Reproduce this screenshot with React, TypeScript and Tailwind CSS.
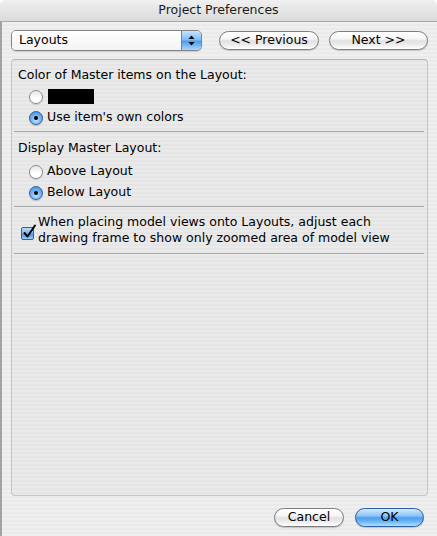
import React from "react";

const font = { fontFamily: '"DejaVu Sans", "Liberation Sans", sans-serif' };

const AquaButton = ({ label, width, primary }: { label: string; width: string; primary?: boolean }) => (
  <div
    className={`${width} h-[19px] flex items-center justify-center rounded-full border text-[12.5px] leading-none shadow-[0_1px_1px_rgba(0,0,0,0.18)] ${
      primary
        ? "border-[#2c5ea6] text-black bg-[linear-gradient(to_bottom,#d2e9fd_0%,#8cc5f6_40%,#4f9eee_52%,#6cb7f6_75%,#b2e2fd_100%)]"
        : "border-[#7d7d7d] text-black bg-[linear-gradient(to_bottom,#ffffff_0%,#f6f6f6_40%,#e1e1e1_52%,#ececec_75%,#ffffff_100%)]"
    }`}
  >
    {label}
  </div>
);

const Radio = ({ checked }: { checked?: boolean }) =>
  checked ? (
    <div className="w-[14px] h-[14px] shrink-0 rounded-full border border-[#3a5f93] flex items-center justify-center bg-[radial-gradient(circle_at_50%_70%,#bfe4ff_0%,#6cb2f2_50%,#3a86da_100%)] shadow-[0_1px_1px_rgba(0,0,0,0.2)]">
      <div className="w-[4px] h-[4px] rounded-full bg-black" />
    </div>
  ) : (
    <div className="w-[14px] h-[14px] shrink-0 rounded-full border border-[#8c8c8c] bg-[linear-gradient(to_bottom,#e6e6e6_0%,#ffffff_60%,#ffffff_100%)] shadow-[0_1px_1px_rgba(0,0,0,0.15)]" />
  );

const Checkbox = () => (
  <div className="relative w-[13px] h-[13px] rounded-[2px] border border-[#3a5f93] bg-[linear-gradient(to_bottom,#b9dcfb_0%,#74b6f2_50%,#4a97e8_60%,#9ad3fb_100%)]">
    <svg className="absolute -top-[4px] left-[1px]" width="14" height="15" viewBox="0 0 14 15">
      <path d="M1.5 9 L4.5 12.5 L12 1.5" fill="none" stroke="#000" strokeWidth="2" strokeLinecap="round" strokeLinejoin="round" />
    </svg>
  </div>
);

const Divider = () => <div className="h-px bg-[#a9a9a9] ml-[2px] mr-[3px]" />;

export default function App() {
  return (
    <div className="w-[437px] h-[536px] bg-white overflow-hidden text-black" style={font}>
      {/* title bar */}
      <div className="h-[22px] rounded-t-[5px] border-b border-[#a8a8a8] bg-[linear-gradient(to_bottom,#f0f0f0,#dadada)] flex items-center justify-center text-[12.5px] text-[#1c1c1c]">
        Project Preferences
      </div>

      <div className="h-[514px] border-l-2 border-[#a3a3a3] flex flex-col bg-[repeating-linear-gradient(to_bottom,#efefef_0px,#efefef_2px,#eaeaea_2px,#eaeaea_4px)]">
        {/* toolbar */}
        <div className="flex items-center pl-[9px] mt-[8px]">
          <div className="w-[191px] h-[21px] flex rounded-[5px] border border-[#848484] overflow-hidden shadow-[0_1px_1px_rgba(0,0,0,0.15)]">
            <div className="flex-1 flex items-center pl-[7px] text-[12.5px] bg-[linear-gradient(to_bottom,#ffffff,#f3f3f3)]">
              Layouts
            </div>
            <div className="w-[20px] flex items-center justify-center border-l border-[#5e86be] bg-[linear-gradient(to_bottom,#c6e4fd_0%,#7fbdf5_45%,#4f9ced_55%,#a5d7fc_100%)]">
              <svg width="7" height="11" viewBox="0 0 7 11">
                <path d="M3.5 0.5 L6.5 4 L0.5 4 Z" fill="#000" />
                <path d="M0.5 7 L6.5 7 L3.5 10.5 Z" fill="#000" />
              </svg>
            </div>
          </div>
          <div className="ml-[17px]">
            <AquaButton label="<< Previous" width="w-[100px]" />
          </div>
          <div className="ml-[10px]">
            <AquaButton label="Next >>" width="w-[99px]" />
          </div>
        </div>

        {/* group box */}
        <div className="ml-[9px] mt-[8px] w-[417px] h-[437px] rounded-[4px] border border-[#c4c4c4] border-t-[#b4b4b4] bg-black/[0.02] text-[12.5px]">
          <div className="pl-[6px] pt-[5px] h-[20px] box-content flex items-center">
            Color of Master items on the Layout:
          </div>
          <div className="mt-[1px] h-[21px] flex items-center pl-[17px]">
            <Radio />
            <div className="ml-[5px] w-[46px] h-[15px] bg-black" />
          </div>
          <div className="h-[21px] flex items-center pl-[17px]">
            <Radio checked />
            <span className="ml-[4px]">Use item's own colors</span>
          </div>
          <div className="mt-[3px]">
            <Divider />
          </div>

          <div className="pl-[6px] mt-[6px] h-[20px] flex items-center">Display Master Layout:</div>
          <div className="mt-[3px] h-[21px] flex items-center pl-[17px]">
            <Radio />
            <span className="ml-[4px]">Above Layout</span>
          </div>
          <div className="h-[21px] flex items-center pl-[17px]">
            <Radio checked />
            <span className="ml-[4px]">Below Layout</span>
          </div>
          <div className="mt-[3px]">
            <Divider />
          </div>

          <div className="mt-[7px] flex pl-[9px]">
            <div className="mt-[13px]">
              <Checkbox />
            </div>
            <div className="ml-[4px] leading-[16px]">
              When placing model views onto Layouts, adjust each
              <br />
              drawing frame to show only zoomed area of model view
            </div>
          </div>
          <div className="mt-[7px]">
            <Divider />
          </div>
        </div>

        {/* bottom buttons */}
        <div className="flex justify-end pr-[13px] mt-[12px]">
          <AquaButton label="Cancel" width="w-[70px]" />
          <div className="ml-[11px]">
            <AquaButton label="OK" width="w-[69px]" primary />
          </div>
        </div>
      </div>
    </div>
  );
}
